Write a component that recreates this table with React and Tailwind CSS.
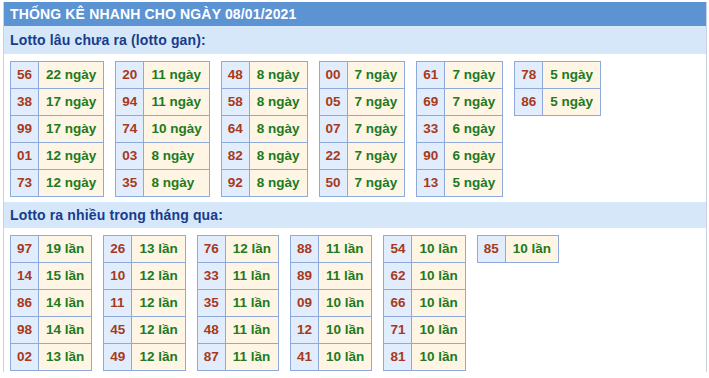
const gan = [
  [["56", 22], ["38", 17], ["99", 17], ["01", 12], ["73", 12]],
  [["20", 11], ["94", 11], ["74", 10], ["03", 8], ["35", 8]],
  [["48", 8], ["58", 8], ["64", 8], ["82", 8], ["92", 8]],
  [["00", 7], ["05", 7], ["07", 7], ["22", 7], ["50", 7]],
  [["61", 7], ["69", 7], ["33", 6], ["90", 6], ["13", 5]],
  [["78", 5], ["86", 5]],
];

const nhieu = [
  [["97", 19], ["14", 15], ["86", 14], ["98", 14], ["02", 13]],
  [["26", 13], ["10", 12], ["11", 12], ["45", 12], ["49", 12]],
  [["76", 12], ["33", 11], ["35", 11], ["48", 11], ["87", 11]],
  [["88", 11], ["89", 11], ["09", 10], ["12", 10], ["41", 10]],
  [["54", 10], ["62", 10], ["66", 10], ["71", 10], ["81", 10]],
  [["85", 10]],
];

function Group({ rows, unit }) {
  return (
    <table className="border-collapse border border-[#8eaadb] self-start">
      <tbody>
        {rows.map(([so, n]) => (
          <tr key={so} className="h-[27px]">
            <td className="border border-[#8eaadb] bg-[#e1edfc] px-[6px] text-[#a8391b]">{so}</td>
            <td className="border border-[#8eaadb] bg-[#fef5e4] px-[7px] text-[#217a1c]">
              {n} {unit}
            </td>
          </tr>
        ))}
      </tbody>
    </table>
  );
}

function Section({ title, cols, unit, gap, bar }) {
  return (
    <>
      <div className={`${bar} bg-[#d6e7fa] pl-[6px] flex items-center text-[14px] font-bold tracking-[0.15px] text-[#173c8c]`}>
        {title}
      </div>
      <div className={`flex items-start pl-[6px] pt-[7px] pb-[5px] ${gap}`}>
        {cols.map((rows, i) => (
          <Group key={i} rows={rows} unit={unit} />
        ))}
      </div>
    </>
  );
}

export default function App() {
  return (
    <div
      className="bg-white w-[709px] h-[378px] pt-[2px] pl-[3px]"
      style={{ fontFamily: '"Liberation Sans", Arial, sans-serif' }}
    >
      <div className="w-[704px] h-[370px] border-x border-[#c9d2e3] text-[13.5px] font-bold">
        <div className="h-[24px] bg-[#5b93d3] pl-[6px] flex items-center text-white text-[14px] font-bold tracking-[0.15px]">
          THỐNG KÊ NHANH CHO NGÀY 08/01/2021
        </div>
        <Section title="Lotto lâu chưa ra (lotto gan):" cols={gan} unit="ngày" gap="gap-[11px]" bar="h-[28px]" />
        <Section title="Lotto ra nhiều trong tháng qua:" cols={nhieu} unit="lần" gap="gap-[11px]" bar="h-[26px]" />
      </div>
    </div>
  );
}
